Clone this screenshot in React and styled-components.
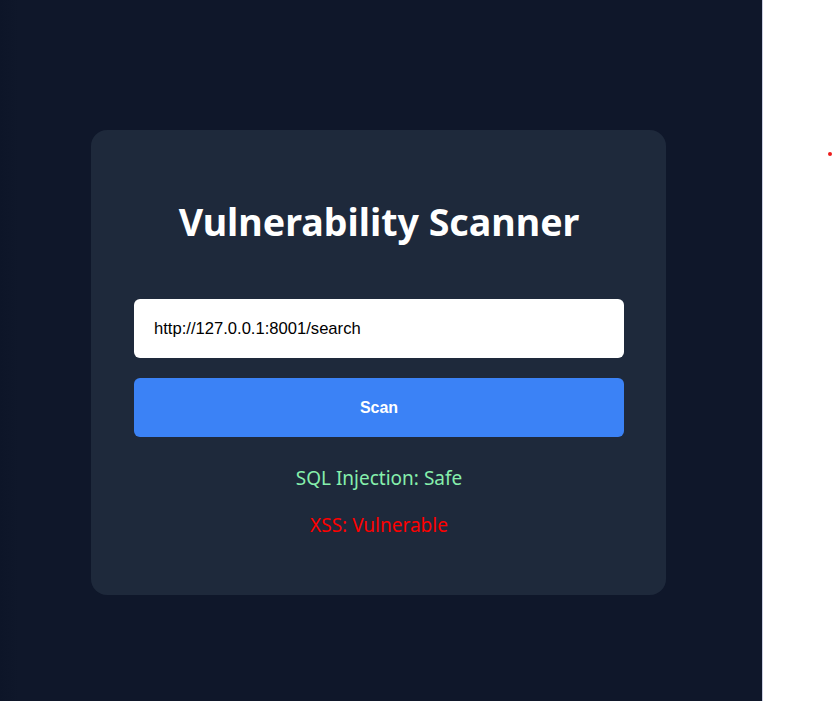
import React from 'react';
import styled, { createGlobalStyle } from 'styled-components';

const GlobalStyle = createGlobalStyle`
  html, body {
    margin: 0;
    padding: 0;
    background: #ffffff;
  }
  * {
    box-sizing: border-box;
  }
`;

const Page = () => {
  const results = [
    { label: 'SQL Injection', status: 'Safe', safe: true },
    { label: 'XSS', status: 'Vulnerable', safe: false },
  ];

  return (
    <>
      <GlobalStyle />
      <Layout>
        <Main>
          <Card>
            <Title>Vulnerability Scanner</Title>
            <UrlInput defaultValue="http://127.0.0.1:8001/search" />
            <ScanButton>Scan</ScanButton>
            <Results>
              {results.map(r => (
                <Result key={r.label} safe={r.safe}>
                  {r.label}: {r.status}
                </Result>
              ))}
            </Results>
          </Card>
        </Main>
        <Side>
          <Dot />
        </Side>
      </Layout>
    </>
  );
};

const Layout = styled.div`
  display: flex;
  height: 701px;
  overflow: hidden;
`;

const Main = styled.main`
  width: 762px;
  flex-shrink: 0;
  height: 100%;
  background: linear-gradient(90deg, #0d1528 0px, #0f172a 18px);
  padding: 130px 0 0 91px;
`;

const Card = styled.section`
  width: 575px;
  height: 465px;
  background: #1e293b;
  border-radius: 16px;
  padding: 66px 42px 0 43px;
  display: flex;
  flex-direction: column;
`;

const Title = styled.h1`
  margin: 0 0 51px;
  text-align: center;
  color: #ffffff;
  font-family: 'Noto Sans', 'Open Sans', sans-serif;
  font-weight: 700;
  font-size: 37.6px;
  line-height: 52px;
`;

const UrlInput = styled.input`
  height: 59px;
  width: 100%;
  padding: 0 20px;
  border: none;
  border-radius: 6px;
  background: #ffffff;
  color: #000000;
  font-family: 'Liberation Sans', Arial, sans-serif;
  font-size: 16.6px;

  &:focus {
    outline: none;
  }
`;

const ScanButton = styled.button`
  margin-top: 20px;
  height: 59px;
  width: 100%;
  border: none;
  border-radius: 6px;
  background: #3b82f6;
  color: #ffffff;
  font-family: 'Liberation Sans', Arial, sans-serif;
  font-weight: 700;
  font-size: 16px;
  cursor: pointer;
`;

const Results = styled.div`
  margin-top: 28px;
  display: flex;
  flex-direction: column;
  gap: 20px;
  align-items: center;
`;

const Result = styled.p`
  margin: 0;
  font-family: 'Noto Sans', 'Open Sans', sans-serif;
  font-size: 19px;
  line-height: 27px;
  color: ${props => (props.safe ? '#86efac' : '#ff0000')};
`;

const Side = styled.aside`
  flex: 1;
  position: relative;
  background: #ffffff;
  border-left: 1px solid #c9cde0;
`;

const Dot = styled.span`
  position: absolute;
  left: 65px;
  top: 152px;
  width: 4px;
  height: 4px;
  border-radius: 50%;
  background: #ee1c1c;
`;

export default Page;
